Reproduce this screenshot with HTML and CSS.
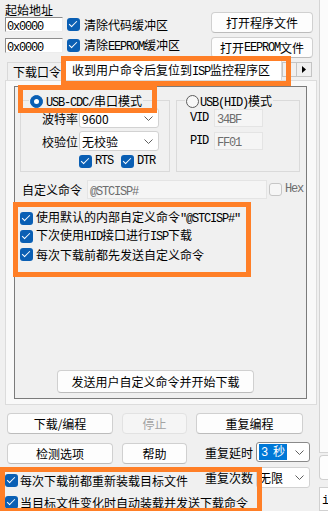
FILE: index.html
```html
<!DOCTYPE html>
<html lang="zh-CN">
<head>
<meta charset="utf-8">
<title>STC-ISP</title>
<link rel="stylesheet" href="styles.css">
</head>
<body>
<div class="app">
  <div class="main">
    <div class="top">
      <div class="addr">
        <div class="title">起始地址</div>
        <div class="arow">
          <div class="edit"><span class="ss">0x0000</span></div>
          <span class="chk"></span>
          <span class="atxt">清除代码缓冲区</span>
        </div>
        <div class="arow">
          <div class="edit"><span class="ss">0x0000</span></div>
          <span class="chk"></span>
          <span class="atxt">清除<span class="ss">EEPROM</span>缓冲区</span>
        </div>
      </div>
      <div class="files">
        <div class="btn">打开程序文件</div>
        <div class="btn">打开<span class="ss">EEPROM</span>文件</div>
      </div>
    </div>

    <div class="tabstrip">
      <div class="tab">下载口令</div>
      <div class="tab active">收到用户命令后复位到<span class="ss">ISP</span>监控程序区</div>
      <div class="scroller">
        <span class="sbtn"></span>
        <span class="sbtn"><svg width="4" height="7" viewBox="0 0 4 7"><polygon points="0,0 4,3.5 0,7" fill="#000"/></svg></span>
      </div>
    </div>

    <div class="page">
      <div class="frame">
        <div class="groups">
          <fieldset class="fs1">
            <legend><span class="radio on"></span><span class="lg"><span class="ss">USB-CDC/</span>串口模式</span></legend>
            <div class="frow first">
              <span class="flabel">波特率</span>
              <div class="combo"><span>9600</span><svg class="chev" width="9" height="5" viewBox="0 0 9 5"><path d="M0.5 0.5l4 4 4-4" fill="none" stroke="#5f5f5f"/></svg></div>
            </div>
            <div class="frow">
              <span class="flabel">校验位</span>
              <div class="combo"><span>无校验</span><svg class="chev" width="9" height="5" viewBox="0 0 9 5"><path d="M0.5 0.5l4 4 4-4" fill="none" stroke="#5f5f5f"/></svg></div>
            </div>
            <div class="crow">
              <span class="chk"></span><span class="ctxt ss">RTS</span>
              <span class="chk dtr"></span><span class="ctxt ss">DTR</span>
            </div>
          </fieldset>
          <fieldset class="fs2">
            <legend><span class="radio"></span><span class="lg2"><span class="ss">USB(HID)</span>模式</span></legend>
            <div class="hrow first">
              <span class="hlabel ss">VID</span>
              <div class="dfield"><span class="ss">34BF</span></div>
            </div>
            <div class="hrow">
              <span class="hlabel ss">PID</span>
              <div class="dfield"><span class="ss">FF01</span></div>
            </div>
          </fieldset>
        </div>

        <div class="cmdrow">
          <span class="cmdlabel">自定义命令</span>
          <div class="cmdfield"><span class="ss">@STCISP#</span></div>
          <span class="chk off"></span>
          <span class="hex ss">Hex</span>
        </div>

        <div class="clist">
          <div class="citem"><span class="chk"></span><span class="ctext">使用默认的内部自定义命令<span class="ss">"@STCISP#"</span></span></div>
          <div class="citem"><span class="chk"></span><span class="ctext">下次使用<span class="ss">HID</span>接口进行<span class="ss">ISP</span>下载</span></div>
          <div class="citem"><span class="chk"></span><span class="ctext">每次下载前都先发送自定义命令</span></div>
        </div>

        <div class="btn send">发送用户自定义命令并开始下载</div>
      </div>
    </div>

    <div class="bottom">
      <div class="btn b1">下载/编程</div>
      <div class="btn dis b1">停止</div>
      <div class="btn b3">重复编程</div>

      <div class="btn b2">检测选项</div>
      <div class="btn b2">帮助</div>
      <div class="rrow r2">
        <span class="rlabel">重复延时</span>
        <div class="combo small focus"><span class="sel"><span class="ss">3&nbsp;</span>秒</span><svg class="chev" width="9" height="5" viewBox="0 0 9 5"><path d="M0.5 0.5l4 4 4-4" fill="none" stroke="#5f5f5f"/></svg></div>
      </div>

      <div class="bcheck bc1"><span class="chk"></span><span class="btxt">每次下载前都重新装载目标文件</span></div>
      <div class="rrow r3">
        <span class="rlabel">重复次数</span>
        <div class="combo small"><span>无限</span><svg class="chev" width="9" height="5" viewBox="0 0 9 5"><path d="M0.5 0.5l4 4 4-4" fill="none" stroke="#5f5f5f"/></svg></div>
      </div>

      <div class="bcheck bc2"><span class="chk"></span><span class="btxt">当目标文件变化时自动装载并发送下载命令</span></div>
    </div>
  </div>

  <div class="side">
    <div class="side-top"></div>
    <div class="side-btn"></div>
    <div class="side-box"><span class="ss">i</span></div>
  </div>
</div>

<div class="mark m1"></div>
<div class="mark m2"></div>
<div class="mark m3"></div>
<div class="mark m4"></div>
</body>
</html>
```

FILE: styles.css
```css
* { box-sizing: border-box; }
html, body { margin: 0; padding: 0; }
body {
  width: 328px;
  height: 511px;
  overflow: hidden;
  position: relative;
  background: #f0f0f0;
  color: #000;
  font-family: "Noto Sans CJK SC", "Noto Sans", sans-serif;
  font-size: 12px;
  line-height: 15px;
}
.ss {
  font-family: "Liberation Mono", "DejaVu Sans Mono", monospace;
  letter-spacing: -1.2px;
}
.app { display: flex; height: 511px; }
.main { width: 319px; display: flex; flex-direction: column; }
.side { width: 9px; display: flex; flex-direction: column; }

/* top */
.top { display: flex; height: 58px; }
.addr { padding-left: 5px; }
.title { height: 17px; padding-top: 2px; line-height: 15px; }
.arow { display: flex; align-items: center; height: 15px; }
.arow + .arow { margin-top: 6px; }
.edit {
  width: 58px; height: 15px;
  background: #fff;
  border-top: 1px solid #8d8d8d;
  border-left: 1px solid #8d8d8d;
  border-right: 1px solid #ececec;
  border-bottom: 1px solid #ececec;
  line-height: 13px;
  padding-left: 1px;
}
.arow .chk { margin-left: 4px; }
.atxt { margin-left: 4px; white-space: nowrap; }
.files {
  margin-left: auto; margin-right: 6px;
  padding-top: 12px;
  display: flex; flex-direction: column; gap: 4px;
}
.files .btn { width: 102px; height: 21px; }

.btn {
  display: flex; align-items: center; justify-content: center;
  background: #fdfdfd;
  border: 1px solid #d0d0d0;
  border-bottom-color: #bcbcbc;
  border-radius: 4px;
  white-space: nowrap;
  line-height: 14px;
}
.btn.dis { background: #f5f5f5; border-color: #e2e2e2; color: #a3a3a3; }

/* checkbox / radio */
.chk {
  display: inline-block; flex: none;
  width: 13px; height: 13px;
  border-radius: 3px;
  background: #0a5fb4;
  position: relative;
}
.chk::after {
  content: "";
  position: absolute;
  left: 4px; top: 1px;
  width: 3px; height: 7px;
  border: solid #fff;
  border-width: 0 1.3px 1.3px 0;
  transform: rotate(45deg);
}
.chk.off { background: #f6f6f6; border: 1px solid #c6c6c6; }
.chk.off::after { display: none; }
.radio {
  display: inline-block; flex: none;
  width: 13px; height: 13px;
  border-radius: 50%;
  border: 1px solid #5c5c5c;
  background: #f7f7f7;
  position: relative;
  vertical-align: middle;
}
.radio.on { background: #0a5fb4; border-color: #0a5fb4; }
.radio.on::after {
  content: "";
  position: absolute;
  left: 3px; top: 3px;
  width: 5px; height: 5px;
  border-radius: 50%;
  background: #fff;
}

/* tabs */
.tabstrip {
  display: flex; align-items: flex-end;
  height: 22px;
  margin: 0 2px 0 5px;
}
.tab {
  height: 18px;
  margin-left: 2px;
  padding: 1px 4px 0 5px;
  border: 1px solid #d9d9d9;
  border-bottom: none;
  background: #f0f0f0;
  white-space: nowrap;
}
.tab.active {
  height: 22px;
  width: 217px;
  margin-left: -1px;
  padding: 3px 6px 0 6px;
  background: #fff;
  overflow: hidden;
}
.scroller { margin-left: auto; margin-right: 5px; margin-bottom: 3px; display: flex; }
.sbtn {
  width: 15px; height: 15px;
  border: 1px solid #c4c4c4;
  background: #f0f0f0;
  display: flex; align-items: center; justify-content: center;
}
.sbtn + .sbtn { border-left: none; }

.page {
  height: 325px;
  margin: 0 2px 0 5px;
  border: 1px solid #dcdcdc;
  background: #f9f9f9;
  padding: 5px 0 0 8px;
}
.frame {
  width: 293px; height: 313px;
  border: 1px solid #7b7b7b;
  background: #f0f0f0;
  display: flex; flex-direction: column;
}

.groups { display: flex; gap: 6px; margin: 6px 0 0 5px; }
fieldset {
  margin: 0; padding: 0 0 3px 0;
  border: 1px solid #dadada;
  min-width: 0;
}
legend {
  margin-left: 8px;
  padding: 0 1px;
  height: 14px;
  line-height: 14px;
  white-space: nowrap;
}
.lg { margin-left: 3px; vertical-align: middle; }
.lg2 { margin-left: 1px; vertical-align: middle; }
.fs1 { width: 150px; }
.fs2 { width: 124px; }

.frow { display: flex; align-items: center; height: 20px; margin-top: 3px; }
.frow.first { margin-top: 1px; }
.flabel { width: 57px; margin-right: 1px; text-align: right; }
.combo {
  width: 80px; height: 20px;
  background: #fff;
  border: 1px solid #d2d2d2;
  border-radius: 3px;
  display: flex; align-items: center;
  padding-left: 2px;
  white-space: nowrap;
}
.chev { margin-left: auto; margin-right: 5px; flex: none; }
.crow { display: flex; align-items: center; height: 13px; margin-top: 4px; padding-left: 58px; }
.ctxt { margin-left: 3px; }
.chk.dtr { margin-left: 8px; }

.hrow { display: flex; align-items: center; height: 18px; margin-top: 5px; padding-left: 13px; }
.hrow.first { margin-top: 2px; }
.hlabel { width: 18px; }
.dfield {
  width: 49px; height: 18px;
  margin-left: 6px;
  background: #f5f5f5;
  border: 1px solid #e4e4e4;
  color: #6d6d6d;
  padding-left: 2px;
  line-height: 16px;
}

.cmdrow { display: flex; align-items: center; height: 19px; margin-top: 8px; padding-left: 7px; }
.cmdlabel { width: 60px; }
.cmdfield {
  width: 180px; height: 19px;
  margin-left: 5px;
  background: #f5f5f5;
  border: 1px solid #e4e4e4;
  color: #6d6d6d;
  padding-left: 2px;
  line-height: 17px;
}
.cmdrow .chk { margin-left: 2px; }
.hex { margin-left: 3px; color: #6d6d6d; }

.clist { margin-top: 10px; padding-left: 5px; }
.citem { display: flex; align-items: center; height: 18px; }
.ctext { margin-left: 3px; white-space: nowrap; }

.send {
  margin: auto 0 5px 42px;
  width: 197px; height: 23px;
}

/* bottom */
.bottom {
  display: grid;
  grid-template-columns: 106px 65px 114px;
  grid-template-rows: 21px 30px 25px 1fr;
  column-gap: 9px;
  margin-top: 8px;
  padding-left: 7px;
  flex: 1;
}
.b1 { height: 21px; }
.b2 { height: 21px; align-self: end; }
.b3 { width: 107px; height: 21px; }
.rrow { display: flex; align-items: center; }
.r2 { align-self: end; margin-bottom: 2px; }
.r3 { align-self: start; margin-top: 3px; }
.rlabel { margin-left: 9px; width: 48px; }
.combo.small { width: 54px; margin-left: 3px; padding-left: 2px; }
.r3 .combo.small { height: 21px; }
.combo.focus { border-color: #8a8a8a; }
.sel { background: #0078d7; color: #fff; padding: 0 2px; line-height: 14px; }
.bcheck { display: flex; align-items: center; margin-left: -2px; }
.bc1 { grid-column: 1 / 3; align-self: end; margin-bottom: 1px; }
.bc2 { grid-column: 1 / 4; align-self: start; margin-top: 6px; }
.btxt { margin-left: 2px; white-space: nowrap; }

/* side strip */
.side-top { height: 453px; background: #fbfbfb; border-left: 1px solid #d4d4d4; border-bottom: 1px solid #d4d4d4; }
.side-btn { height: 25px; margin-top: 2px; background: #fdfdfd; border: 1px solid #d0d0d0; border-right: none; border-radius: 4px 0 0 4px; }
.side-box { height: 24px; margin-top: 7px; background: #fff; border: 1px solid #d0d0d0; border-right: none; padding-left: 2px; line-height: 22px; }

/* annotation boxes */
.mark { position: absolute; border: 5px solid #ff7f27; }
.m1 { left: 61px; top: 56px; width: 230px; height: 30px; }
.m2 { left: 18px; top: 85px; width: 139px; height: 28px; }
.m3 { left: 13px; top: 202px; width: 238px; height: 75px; }
.m4 { left: 0; top: 467px; width: 262px; height: 46px; }
```
